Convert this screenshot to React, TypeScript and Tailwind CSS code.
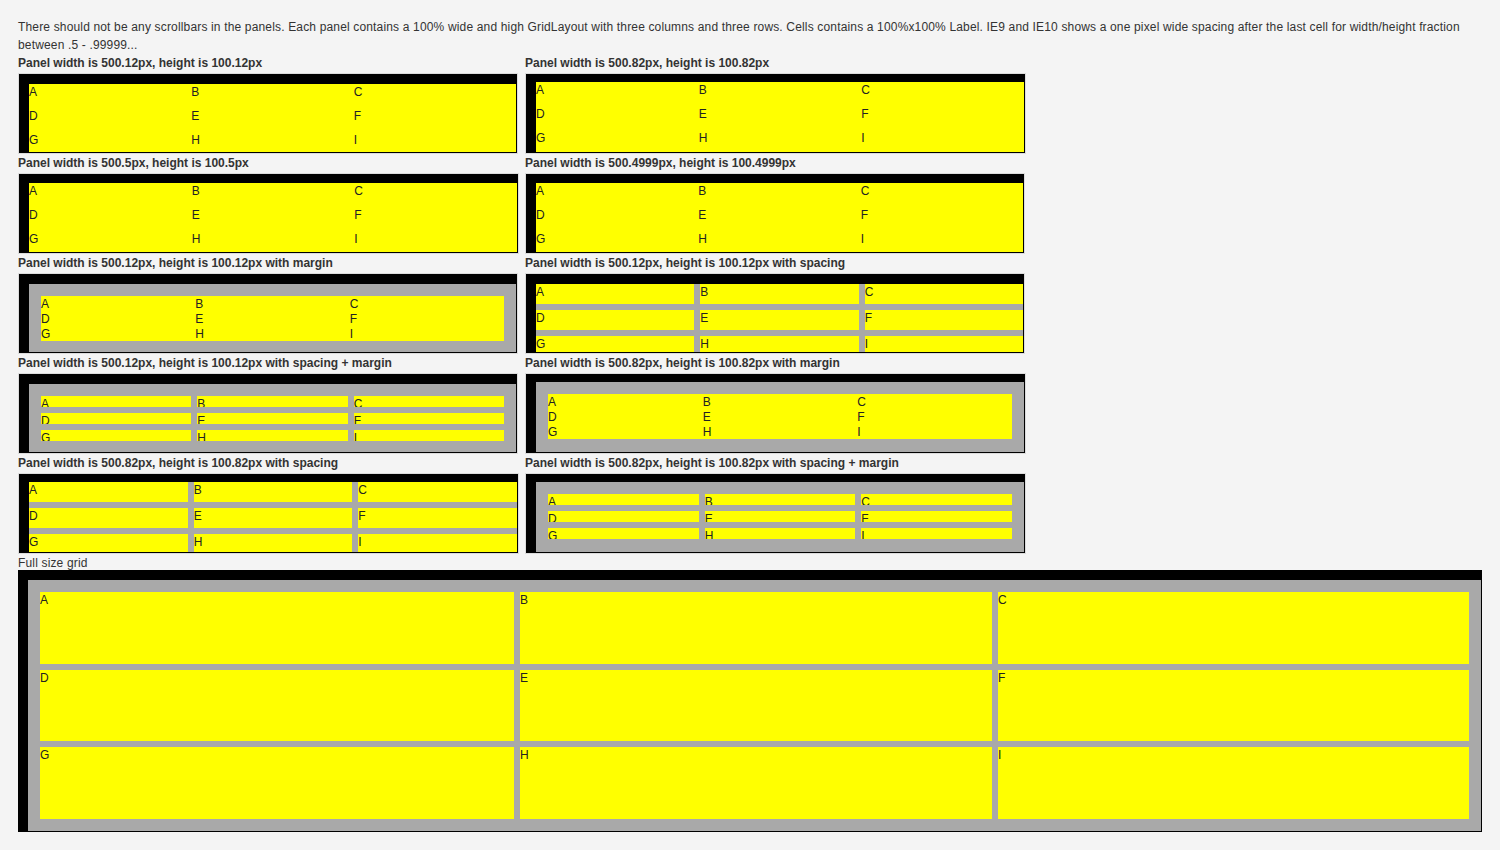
import React from "react";

type PanelDef = {
  label: string;
  size: string;
  body: string;
  margin?: boolean;
  spacing?: boolean;
};

const letters = ["A", "B", "C", "D", "E", "F", "G", "H", "I"];

// left column / right column, row by row
const panels: PanelDef[] = [
  { label: "Panel width is 500.12px, height is 100.12px", size: "w-[500px] pt-[10px]", body: "h-[68px]" },
  { label: "Panel width is 500.82px, height is 100.82px", size: "w-[501px] pt-[8px]", body: "h-[70px]" },
  { label: "Panel width is 500.5px, height is 100.5px", size: "w-[501px] pt-[9px]", body: "h-[69px]" },
  { label: "Panel width is 500.4999px, height is 100.4999px", size: "w-[500px] pt-[9px]", body: "h-[69px]" },
  { label: "Panel width is 500.12px, height is 100.12px with margin", size: "w-[500px] pt-[10px]", body: "h-[68px]", margin: true },
  { label: "Panel width is 500.12px, height is 100.12px with spacing", size: "w-[500px] pt-[10px]", body: "h-[68px]", spacing: true },
  { label: "Panel width is 500.12px, height is 100.12px with spacing + margin", size: "w-[500px] pt-[10px]", body: "h-[68px]", margin: true, spacing: true },
  { label: "Panel width is 500.82px, height is 100.82px with margin", size: "w-[501px] pt-[8px]", body: "h-[70px]", margin: true },
  { label: "Panel width is 500.82px, height is 100.82px with spacing", size: "w-[501px] pt-[8px]", body: "h-[70px]", spacing: true },
  { label: "Panel width is 500.82px, height is 100.82px with spacing + margin", size: "w-[501px] pt-[8px]", body: "h-[70px]", margin: true, spacing: true },
];

const Cells = ({ spacing, h, cols = "grid-cols-3" }: { spacing?: boolean; h: string; cols?: string }) => (
  <div
    className={
      spacing
        ? `grid grid-rows-3 gap-[6px] bg-[#a9a9a9] ${cols} ${h}`
        : `grid grid-rows-3 ${cols} ${h}`
    }
  >
    {letters.map((l) => (
      <div key={l} className="overflow-hidden bg-[#ffff00] text-[12px] leading-[17px] text-[#222]">
        {l}
      </div>
    ))}
  </div>
);

const Panel = ({ p }: { p: PanelDef }) => (
  <div>
    <div className="h-[19px] font-bold whitespace-nowrap">{p.label}</div>
    <div className={`border border-[#dcdcdc] bg-black pb-px pl-[10px] pr-px ${p.size}`}>
      {/* grid is a bit taller than the visible body, the panel clips it */}
      <div className={`overflow-hidden ${p.body}`}>
        {p.margin ? (
          <div className="h-full bg-[#a9a9a9] p-[12px]">
            <Cells spacing={p.spacing} h="h-[45px]" />
          </div>
        ) : (
          <Cells spacing={p.spacing} h="h-[72px]" />
        )}
      </div>
    </div>
  </div>
);

export default function App() {
  return (
    <div className="min-h-screen bg-[#f4f4f4] px-[18px] pt-[18px] font-['Liberation_Sans',Arial,sans-serif] text-[12px] leading-[18px] text-[#333]">
      <p className="tracking-[0.16px]">
        There should not be any scrollbars in the panels. Each panel contains a 100% wide and high GridLayout with
        three columns and three rows. Cells contains a 100%x100% Label. IE9 and IE10 shows a one pixel wide spacing
        after the last cell for width/height fraction
        <br />
        between .5 - .99999...
      </p>
      <div className="grid grid-cols-[507px_501px]">
        {panels.map((p) => (
          <Panel key={p.label} p={p} />
        ))}
      </div>
      <div className="h-[16px] tracking-[0.16px]">Full size grid</div>
      <div className="h-[262px] bg-black pb-px pl-[10px] pr-px pt-[10px]">
        <div className="h-full bg-[#a9a9a9] p-[12px]">
          <Cells spacing h="h-full" cols="grid-cols-[474fr_472fr_471fr]" />
        </div>
      </div>
    </div>
  );
}
